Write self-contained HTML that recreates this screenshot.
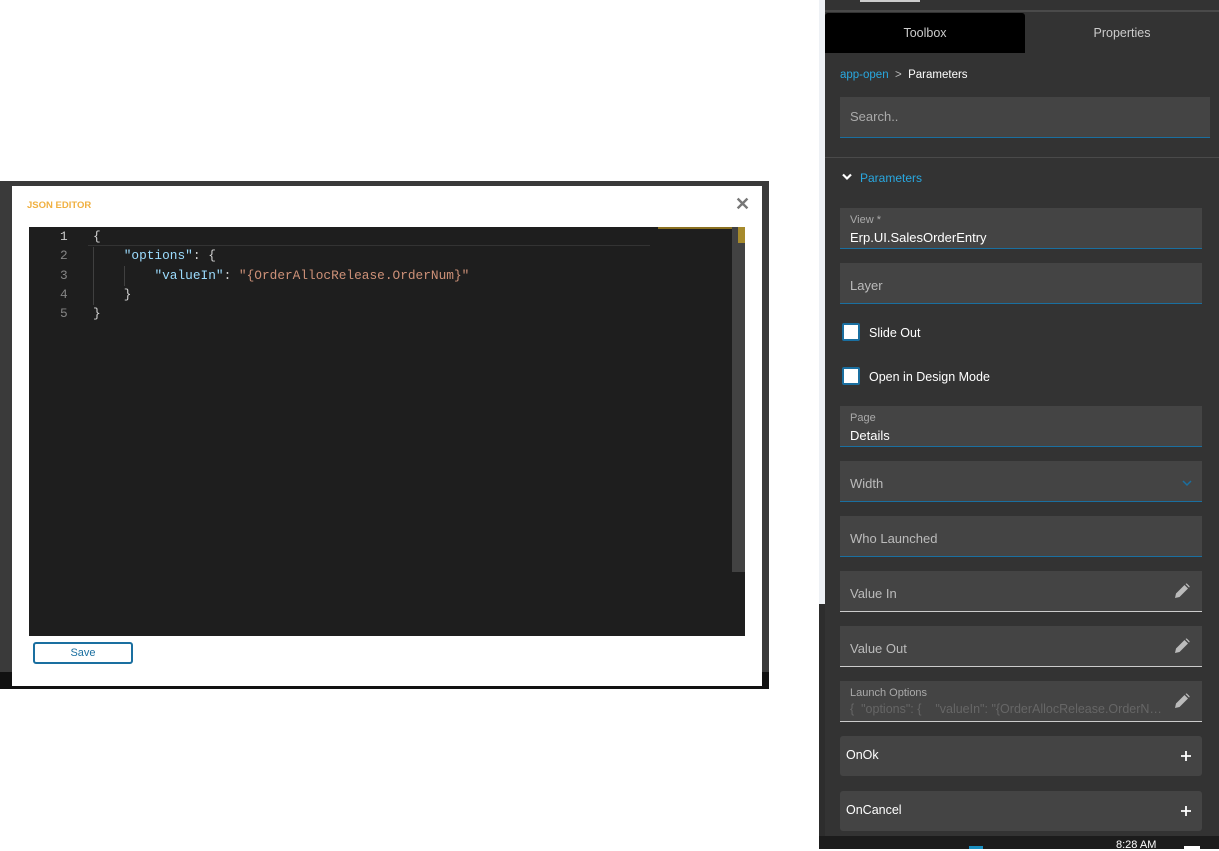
<!DOCTYPE html>
<html><head><style>
*{margin:0;padding:0;box-sizing:border-box}
body{width:1219px;height:849px;background:#fff;position:relative;overflow:hidden;font-family:"Liberation Sans",sans-serif;font-size:13px}
.a{position:absolute}
.f{position:absolute;left:840px;width:362px;background:#444;border-bottom:1px solid #1a6fa0}
.f.w{border-bottom:1px solid #ccc}
.lab{position:absolute;left:10px;color:#bbb;font-size:13px}
.sm{position:absolute;left:10px;top:6px;color:#aaa;font-size:11px}
.val{position:absolute;left:10px;top:22px;color:#fff;font-size:13px}
.pen{position:absolute;right:12px;top:12px}
.cb{position:absolute;left:842px;width:18px;height:18px;background:#fff;border:2px solid #1a6fa0;border-radius:2px}
.cl{position:absolute;left:869px;color:#fff;font-size:12.5px}
.mono{font-family:"Liberation Mono",monospace;font-size:12.8px}
.plus{position:absolute;right:11px;top:15px;width:10px;height:10px}
</style></head><body>
<div class="a" style="left:0;top:181px;width:769px;height:508px;background:#3a3a3a"></div>
<div class="a" style="left:0;top:672px;width:769px;height:17px;background:#111"></div>
<div class="a" style="left:12px;top:186px;width:750px;height:500px;background:#fff"></div>
<div class="a" style="left:27px;top:200px;color:#f0b040;font-size:9.5px;font-weight:bold">JSON EDITOR</div>
<div class="a" style="left:735px;top:194px;color:#777;font-size:18px;font-weight:bold">✕</div>
<div class="a" style="left:29px;top:227px;width:716px;height:409px;background:#1e1e1e"></div>
<div class="a" style="left:88px;top:245px;width:562px;height:1px;background:#333"></div>
<div class="a" style="left:732px;top:227px;width:13px;height:345px;background:#424242"></div>
<div class="a" style="left:738px;top:227px;width:7px;height:16px;background:#a68a2c"></div>
<div class="a" style="left:658px;top:227px;width:74px;height:2px;background:#8a7020"></div>
<div class="a mono" style="left:60px;top:227px;color:#ccc;line-height:19.3px">1</div>
<div class="a mono" style="left:60px;top:246.3px;color:#858585;line-height:19.3px">2<br>3<br>4<br>5</div>
<div class="a" style="left:93px;top:247px;width:1px;height:58px;background:#404040"></div>
<div class="a" style="left:124px;top:266px;width:1px;height:20px;background:#404040"></div>
<div class="a mono" style="left:93px;top:227px;color:#d4d4d4;line-height:19.3px;white-space:pre">{
    <span style="color:#9cdcfe">"options"</span>: {
        <span style="color:#9cdcfe">"valueIn"</span>: <span style="color:#ce9178">"{OrderAllocRelease.OrderNum}"</span>
    }
}</div>
<div class="a" style="left:33px;top:642px;width:100px;height:22px;border:2px solid #1a6fa0;border-radius:3px;color:#1a6fa0;font-size:11px;text-align:center;line-height:18px">Save</div>

<div class="a" style="left:819px;top:0;width:6px;height:604px;background:#eef1f5"></div>
<div class="a" style="left:819px;top:604px;width:6px;height:245px;background:#2d2d2d"></div>
<div class="a" style="left:825px;top:0;width:394px;height:849px;background:#333"></div>
<div class="a" style="left:825px;top:10px;width:394px;height:2px;background:#4a4a4a"></div>
<div class="a" style="left:860px;top:0;width:60px;height:2px;background:#ccc"></div>
<div class="a" style="left:825px;top:13px;width:200px;height:40px;background:#000;border-radius:3px 3px 0 0;color:#ccc;text-align:center;line-height:40px;font-size:12.5px">Toolbox</div>
<div class="a" style="left:1025px;top:13px;width:194px;height:40px;color:#ccc;text-align:center;line-height:40px;font-size:12.5px">Properties</div>
<div class="a" style="left:840px;top:69px;font-size:11.5px;color:#29a8e0">app-open <span style="color:#bbb">&nbsp;&gt;&nbsp;</span> <span style="color:#fff">Parameters</span></div>
<div class="a" style="left:840px;top:97px;width:370px;height:41px;background:#444;border-bottom:1px solid #1a6fa0;color:#aaa;font-size:13px;padding:12px 10px">Search..</div>
<div class="a" style="left:825px;top:157px;width:394px;height:1px;background:#4a4a4a"></div>
<svg class="a" style="left:842px;top:173px" width="10" height="8" viewBox="0 0 10 8"><path d="M1 1.5l4 4 4-4" stroke="#fff" stroke-width="2.2" fill="none"/></svg>
<div class="a" style="left:860px;top:171px;color:#29a8e0;font-size:12px">Parameters</div>
<div class="f" style="top:208px;height:41px"><div class="sm">View *</div><div class="val">Erp.UI.SalesOrderEntry</div></div>
<div class="f" style="top:263px;height:41px"><div class="lab" style="top:15px">Layer</div></div>
<div class="cb" style="top:323px"></div><div class="cl" style="top:326px">Slide Out</div>
<div class="cb" style="top:367px"></div><div class="cl" style="top:370px">Open in Design Mode</div>
<div class="f" style="top:406px;height:41px"><div class="sm">Page</div><div class="val">Details</div></div>
<div class="f" style="top:461px;height:41px"><div class="lab" style="top:15px">Width</div><svg class="a" style="right:10px;top:19px" width="10" height="7" viewBox="0 0 10 7"><path d="M1 1l4 4 4-4" stroke="#1a6fa0" stroke-width="1.5" fill="none"/></svg></div>
<div class="f" style="top:516px;height:41px"><div class="lab" style="top:15px">Who Launched</div></div>
<div class="f w" style="top:571px;height:41px"><div class="lab" style="top:15px">Value In</div><svg class="pen" width="16" height="16" viewBox="0 0 16 16"><path d="M1 15l1-4.5 8.5-8.5 3.5 3.5-8.5 8.5z M11.5 1l1.2-0.6 3 3-0.6 1.2z" fill="#bbb"/></svg></div>
<div class="f w" style="top:626px;height:41px"><div class="lab" style="top:15px">Value Out</div><svg class="pen" width="16" height="16" viewBox="0 0 16 16"><path d="M1 15l1-4.5 8.5-8.5 3.5 3.5-8.5 8.5z M11.5 1l1.2-0.6 3 3-0.6 1.2z" fill="#bbb"/></svg></div>
<div class="f w" style="top:681px;height:41px"><div class="sm">Launch Options</div><div class="a" style="left:10px;top:21px;color:#666;font-size:12.5px;white-space:nowrap;width:315px;overflow:hidden;text-overflow:ellipsis">{ &nbsp;"options": { &nbsp;&nbsp;&nbsp;"valueIn": "{OrderAllocRelease.OrderNum}" }</div><svg class="pen" width="16" height="16" viewBox="0 0 16 16"><path d="M1 15l1-4.5 8.5-8.5 3.5 3.5-8.5 8.5z M11.5 1l1.2-0.6 3 3-0.6 1.2z" fill="#bbb"/></svg></div>
<div class="a" style="left:840px;top:736px;width:362px;height:40px;background:#444;border-radius:3px;color:#fff;font-size:12.5px;padding:12px 6px">OnOk<svg class="plus" viewBox="0 0 10 10"><path d="M5 0v10M0 5h10" stroke="#fff" stroke-width="1.8"/></svg></div>
<div class="a" style="left:840px;top:791px;width:362px;height:40px;background:#444;border-radius:3px;color:#fff;font-size:12.5px;padding:12px 6px">OnCancel<svg class="plus" viewBox="0 0 10 10"><path d="M5 0v10M0 5h10" stroke="#fff" stroke-width="1.8"/></svg></div>
<div class="a" style="left:819px;top:836px;width:400px;height:13px;background:#1c1c1c"></div>
<div class="a" style="left:1116px;top:839px;color:#fff;font-size:11px">8:28 AM</div>
<div class="a" style="left:969px;top:846px;width:14px;height:3px;background:#1a8fc0"></div>
<div class="a" style="left:1184px;top:846px;width:16px;height:3px;background:#fff"></div>
</body></html>
